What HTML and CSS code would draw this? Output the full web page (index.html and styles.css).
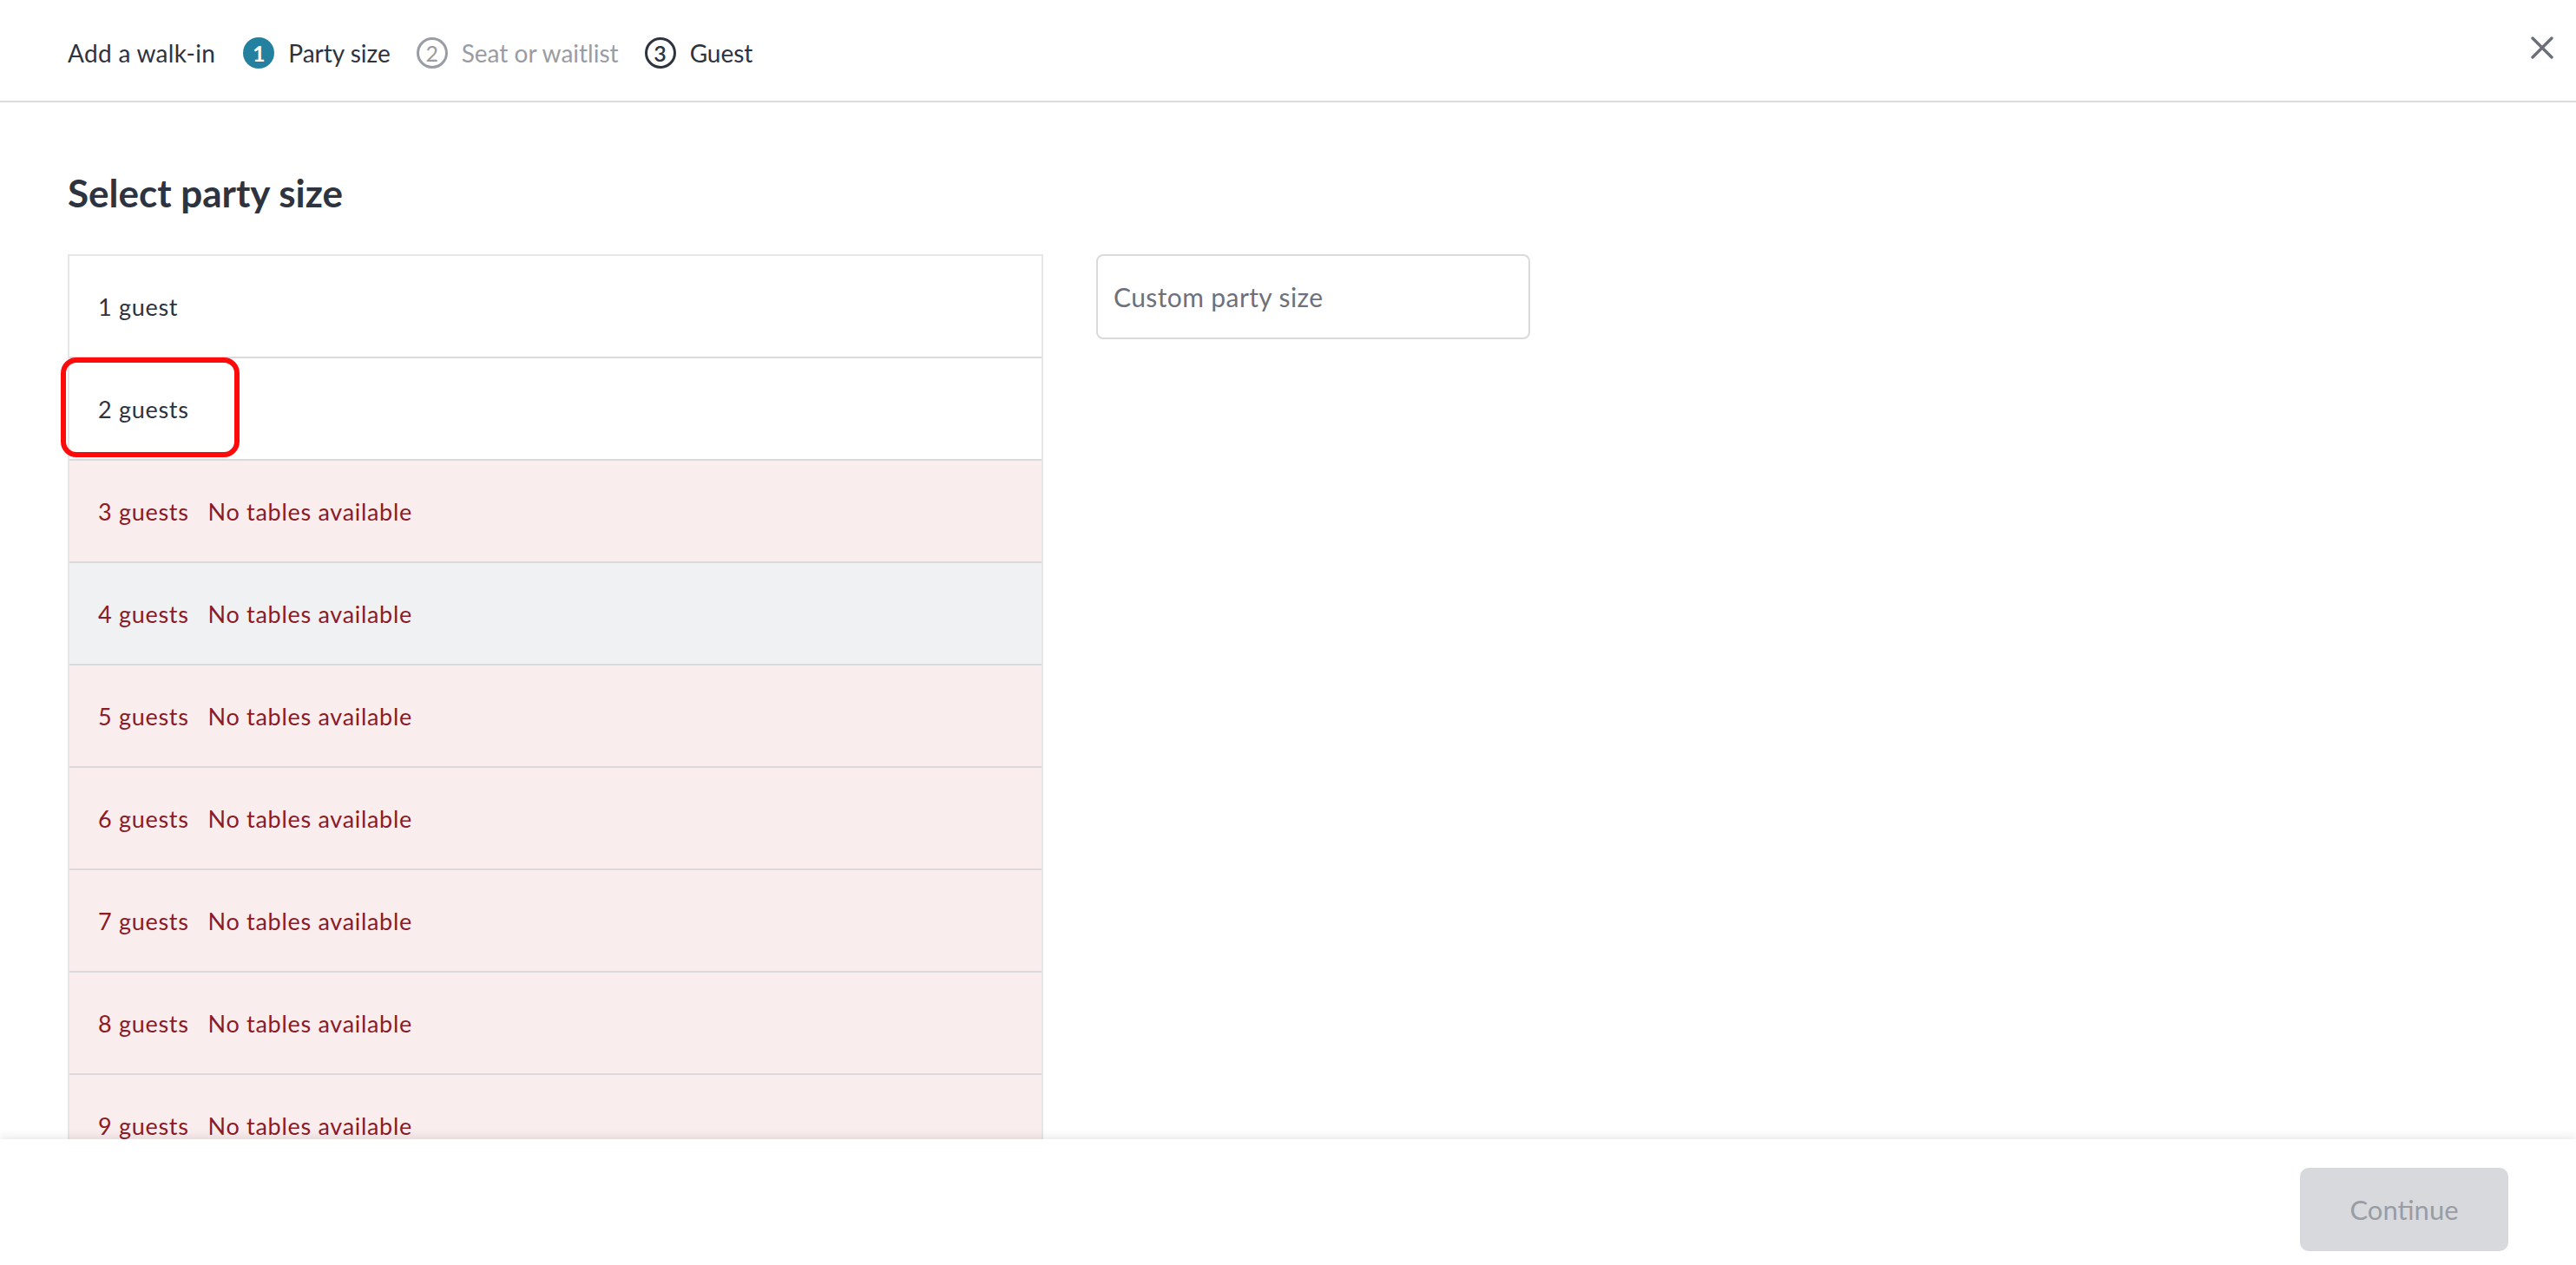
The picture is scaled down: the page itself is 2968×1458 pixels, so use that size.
FILE: index.html
```html
<!DOCTYPE html>
<html lang="en">
<head>
  <meta charset="UTF-8">
  <meta name="viewport" content="width=device-width, initial-scale=1.0">
  <title>Add a walk-in</title>
  <link rel="stylesheet" href="styles.css">
</head>
<body>
  <div class="page">
    <header class="topbar">
      <span class="topbar-title">Add a walk-in</span>
      <ol class="steps">
        <li class="step step-active"><span class="step-num">1</span>Party size</li>
        <li class="step step-todo"><span class="step-num">2</span>Seat or waitlist</li>
        <li class="step step-next"><span class="step-num">3</span>Guest</li>
      </ol>
      <button class="close" aria-label="Close">
        <svg width="26" height="26" viewBox="0 0 26 26"><path d="M2 2 L24 24 M24 2 L2 24" stroke="#6b6f78" stroke-width="3.4" stroke-linecap="round"/></svg>
      </button>
    </header>

    <main class="content">
      <h1 class="heading">Select party size</h1>
      <div class="columns">
        <div class="sizes">
          <div class="size">1 guest</div>
          <div class="size">2 guests</div>
          <div class="size full">3 guests <em>No tables available</em></div>
          <div class="size full hover">4 guests <em>No tables available</em></div>
          <div class="size full">5 guests <em>No tables available</em></div>
          <div class="size full">6 guests <em>No tables available</em></div>
          <div class="size full">7 guests <em>No tables available</em></div>
          <div class="size full">8 guests <em>No tables available</em></div>
          <div class="size full">9 guests <em>No tables available</em></div>
          <div class="size full">10 guests <em>No tables available</em></div>
          <span class="mark"></span>
        </div>
        <input class="custom" type="text" placeholder="Custom party size">
      </div>
    </main>

    <footer class="bottombar">
      <button class="continue" disabled>Continue</button>
    </footer>
  </div>
</body>
</html>
```

FILE: styles.css
```css
* {margin: 0; padding: 0; box-sizing: border-box;}
html, body {height: 100%;}
body {
  font-family: Lato, "Noto Sans", sans-serif;
  color: #2d333f;
  background: #fff;
  overflow: hidden;
}
.page {
  display: flex;
  flex-direction: column;
  height: 100%;
}

/* top bar */
.topbar {
  display: flex;
  align-items: center;
  height: 118px;
  padding: 6px 26px 0 78px;
  border-bottom: 2px solid #dcdcde;
  flex-shrink: 0;
}
.topbar-title {
  font-size: 28px;
  margin-right: 32px;
  letter-spacing: 0.3px;
}
.steps {
  display: flex;
  list-style: none;
  gap: 30px;
}
.step {
  display: flex;
  align-items: center;
  font-size: 28px;
}
.step-num {
  display: flex;
  align-items: center;
  justify-content: center;
  width: 36px;
  height: 36px;
  margin-right: 16px;
  border-radius: 50%;
  font-size: 25px;
  font-weight: 700;
}
.step-active .step-num {
  background: #23809e;
  color: #fff;
}
.step-todo {color: #9a9ca3;}
.step-todo .step-num {
  border: 3px solid #9a9ca3;
  font-weight: 400;
}
.step-next .step-num {
  border: 3px solid #2d333f;
  font-weight: 600;
}
.close {
  margin-left: auto;
  margin-bottom: 12px;
  border: 0;
  background: none;
  display: flex;
}

/* content */
.content {
  flex: 1;
  overflow: hidden;
  padding: 82px 78px 0;
}
.heading {
  font-size: 44px;
  line-height: 1;
  font-weight: 700;
  margin-bottom: 49px;
}
.columns {
  display: flex;
  align-items: flex-start;
  gap: 61px;
}
.sizes {
  position: relative;
  width: 1124px;
  border: 2px solid #e6e6e8;
  border-bottom: 0;
}
.size {
  display: flex;
  align-items: center;
  height: 118px;
  padding-left: 33px;
  font-size: 27px;
  letter-spacing: 0.7px;
  border-bottom: 2px solid #dadadc;
}
.size em {
  font-style: normal;
  margin-left: 22px;
}
.full {
  background: #f9eded;
  color: #8b1b27;
}
.hover {background: #f0f1f3;}
.mark {
  position: absolute;
  left: -10px;
  top: 117px;
  width: 206px;
  height: 115px;
  border: 6px solid #fe0a0a;
  border-radius: 18px;
}
.custom {
  width: 500px;
  height: 98px;
  padding: 0 18px;
  border: 2px solid #dadadc;
  border-radius: 8px;
  font-family: inherit;
  font-size: 30px;
  letter-spacing: 0.4px;
  color: #2d333f;
  outline: none;
}
.custom::placeholder {color: #6d717b;}

/* bottom bar */
.bottombar {
  display: flex;
  justify-content: flex-end;
  height: 145px;
  padding: 33px 78px 0;
  background: #fff;
  box-shadow: 0 -3px 10px rgba(0, 0, 0, 0.09);
  flex-shrink: 0;
  position: relative;
}
.continue {
  width: 240px;
  height: 96px;
  border: 0;
  border-radius: 10px;
  background: #d8d9dc;
  color: #9a9ca3;
  font-family: inherit;
  font-size: 31px;
}
```
